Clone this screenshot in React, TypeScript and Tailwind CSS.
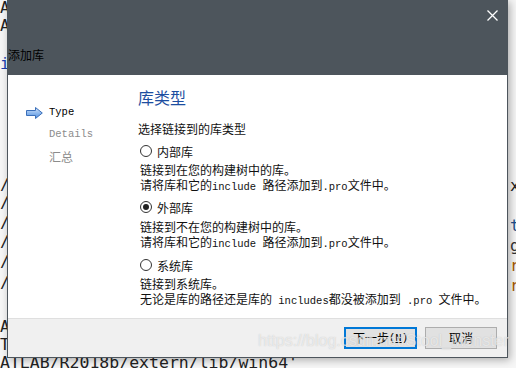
import React from 'react'

const cjk = '"Noto Sans CJK SC", "Microsoft YaHei", sans-serif'
const mono = '"Liberation Mono", "Noto Sans CJK SC", monospace'

function M({ children }: { children: React.ReactNode }) {
  return <span className="text-[10.5px]" style={{ fontFamily: mono }}>{children}</span>
}

const leftBits = [
  { y: 0, t: 'A', c: 'text-[#222]' },
  { y: 18, t: 'A', c: 'text-[#222]' },
  { y: 56, t: 'i', c: 'text-[#1a3fb0]' },
  { y: 177, t: '/', c: 'text-[#222]' },
  { y: 195, t: '/', c: 'text-[#222]' },
  { y: 215, t: '/', c: 'text-[#222]' },
  { y: 234, t: '/', c: 'text-[#222]' },
  { y: 254, t: '/', c: 'text-[#222]' },
  { y: 275, t: '/', c: 'text-[#222]' },
  { y: 319, t: 'A', c: 'text-[#222]' },
  { y: 337, t: 'T', c: 'text-[#222]' },
]

const rightBits = [
  { y: 178, t: 'x', c: 'text-[#222]' },
  { y: 218, t: 't', c: 'text-[#1d4f8c]' },
  { y: 238, t: 'g', c: 'text-[#333]' },
  { y: 258, t: 'r', c: 'text-[#a85a00]' },
  { y: 278, t: 'r', c: 'text-[#a85a00]' },
]

function Radio({ checked, label }: { checked?: boolean; label: string }) {
  return (
    <div className="flex items-center h-[16px]">
      <span className="ml-[2px] w-[12px] h-[12px] rounded-full border border-[#333] bg-white flex items-center justify-center">
        {checked && <span className="w-[6px] h-[6px] rounded-full bg-[#222]" />}
      </span>
      <span className="ml-[5px]">{label}</span>
    </div>
  )
}

function Arrow() {
  return (
    <svg width="17" height="12" viewBox="0 0 17 12">
      <defs>
        <linearGradient id="ag" x1="0" y1="0" x2="0" y2="1">
          <stop offset="0" stopColor="#cfe2fb" />
          <stop offset="1" stopColor="#4f8fe0" />
        </linearGradient>
      </defs>
      <polygon points="0.5,3.5 9.5,3.5 9.5,0.5 16.3,6 9.5,11.5 9.5,8.5 0.5,8.5" fill="url(#ag)" stroke="#3b6fb9" strokeWidth="1" />
    </svg>
  )
}

export default function App() {
  return (
    <div className="relative w-[516px] h-[368px] overflow-hidden bg-[#f6f6f6]" style={{ fontFamily: cjk }}>
      {/* editor text behind the dialog */}
      {leftBits.map((b, i) => (
        <span key={'l' + i} className={`absolute left-0 font-['DejaVu_Sans_Mono'] text-[16px] leading-[16px] ${b.c}`} style={{ top: b.y }}>
          {b.t}
        </span>
      ))}
      {rightBits.map((b, i) => (
        <span key={'r' + i} className={`absolute left-[510px] font-['DejaVu_Sans_Mono'] text-[16px] leading-[16px] ${b.c}`} style={{ top: b.y }}>
          {b.t}
        </span>
      ))}
      <div className="absolute left-0 top-[355px] font-['DejaVu_Sans_Mono'] text-[16.5px] leading-[16px] text-[#222] whitespace-nowrap">
        ATLAB/R2018b/extern/lib/win64'
      </div>

      {/* dialog */}
      <div className="absolute left-[7px] top-0 w-[501px] h-[358px] border border-[#4d555c] bg-white flex flex-col shadow-[2px_2px_8px_rgba(0,0,0,0.3)]">
        <div className="h-[74px] bg-[#4d555c] flex flex-col">
          <div className="flex justify-end pt-[9px] pr-[9px]">
            <svg width="11" height="11" viewBox="0 0 11 11">
              <path d="M0.5 0.5 L10.5 10.5 M10.5 0.5 L0.5 10.5" stroke="#ffffff" strokeWidth="1.3" />
            </svg>
          </div>
          <div className="mt-auto pb-[12px] text-[12px] leading-[16px] text-black">添加库</div>
        </div>

        <div className="flex-1 flex text-[12px] text-[#111]">
          <div className="w-[130px] pt-[27px] pl-[18px]">
            <div className="flex items-center h-[22px]">
              <span className="w-[23px]"><Arrow /></span>
              <span className="text-[10.5px] text-black" style={{ fontFamily: mono }}>Type</span>
            </div>
            <div className="flex items-center h-[22px]">
              <span className="w-[23px]" />
              <span className="text-[10.5px] text-[#8c8c8c]" style={{ fontFamily: mono }}>Details</span>
            </div>
            <div className="flex items-center h-[22px]">
              <span className="w-[23px]" />
              <span className="text-[12px] text-[#8c8c8c]">汇总</span>
            </div>
          </div>

          <div className="flex-1 pt-[12px] leading-[15px]">
            <div className="text-[16px] leading-[20px] text-[#1d4ea0]">库类型</div>
            <div className="mt-[14px] leading-[16px]">选择链接到的库类型</div>
            <div className="mt-[6px]">
              <Radio label="内部库" />
            </div>
            <div className="mt-[3px] pl-[2px]">
              <div>链接到在您的构建树中的库。</div>
              <div>
                请将库和它的<M>include </M>路径添加到<M>.pro</M>文件中。
              </div>
            </div>
            <div className="mt-[4px]">
              <Radio checked label="外部库" />
            </div>
            <div className="mt-[4px] pl-[2px]">
              <div>链接到不在您的构建树中的库。</div>
              <div>
                请将库和它的<M>include </M>路径添加到<M>.pro</M>文件中。
              </div>
            </div>
            <div className="mt-[5px]">
              <Radio label="系统库" />
            </div>
            <div className="mt-[3px] pl-[2px]">
              <div>链接到系统库。</div>
              <div>
                无论是库的路径还是库的<M> includes</M>都没被添加到<M> .pro </M>文件中。
              </div>
            </div>
          </div>
        </div>

        <div className="h-[39px] border-t border-[#dfdfdf] bg-[#f0f0f0] flex justify-end gap-[8px] pt-[8px] pr-[10px]">
          <button className="w-[73px] h-[22px] border-2 border-[#0078d7] bg-[#e1e1e1] text-[12px] leading-[16px] text-black flex items-center justify-center">
            下一步<span className="text-[10.5px]" style={{ fontFamily: mono }}>(<span className="underline">N</span>)</span>
          </button>
          <button className="w-[72px] h-[22px] border border-[#adadad] bg-[#e1e1e1] text-[12px] leading-[16px] text-black flex items-center justify-center">
            取消
          </button>
        </div>
      </div>

      {/* watermark */}
      <div className="absolute left-[258px] top-[332px] font-['Liberation_Sans'] text-[16px] leading-[18px] text-white/60 whitespace-nowrap pointer-events-none [text-shadow:0_0_1px_rgba(150,150,150,0.5)]">
        https://blog.csdn.net/Stool_Monster
      </div>
    </div>
  )
}
